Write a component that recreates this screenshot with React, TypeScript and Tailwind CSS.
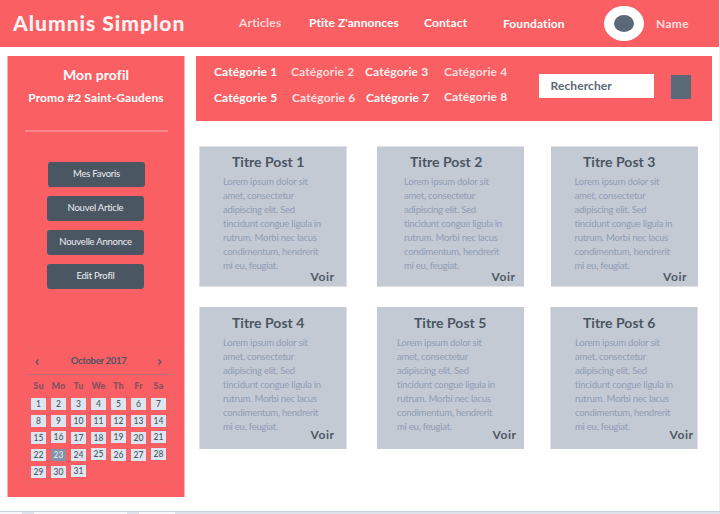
const lorem = [
  "Lorem ipsum dolor sit",
  "amet, consectetur",
  "adipiscing elit. Sed",
  "tincidunt congue ligula in",
  "rutrum. Morbi nec lacus",
  "condimentum, hendrerit",
  "mi eu, feugiat.",
];

type Post = { title: string; card: string; heading: string; body: string; link: string };

const posts: Post[] = [
  { title: "Titre Post 1", card: "h-[141px] w-[148px] border", heading: "pl-8", body: "pl-[23px]", link: "top-[122px] left-[110.5px]" },
  { title: "Titre Post 2", card: "h-[141px] w-[147px] ml-[30px] border-y", heading: "pl-[33px]", body: "pl-[27px]", link: "top-[122px] left-[114.5px]" },
  { title: "Titre Post 3", card: "h-[141px] w-[147px] ml-[27px] border-y", heading: "pl-8", body: "pl-[23.5px]", link: "top-[122px] left-[112px]" },
  { title: "Titre Post 4", card: "h-[142px] w-[148px] border-x pt-px", heading: "pl-8", body: "pl-[23px]", link: "top-[120px] left-[110.5px]" },
  { title: "Titre Post 5", card: "h-[142px] w-[147px] ml-[30px] pt-px", heading: "pl-[37px]", body: "pl-5", link: "top-[120px] left-[115.5px]" },
  { title: "Titre Post 6", card: "h-[142px] w-[148px] ml-[26px] border-x pt-px", heading: "pl-8", body: "pl-[24px]", link: "top-[120px] left-[118.5px]" },
];

const categories = [
  { label: "Catégorie 1", cls: "w-[77px] text-white" },
  { label: "Catégorie 2", cls: "w-[74px] text-[#ffdadc]" },
  { label: "Catégorie 3", cls: "w-[79px] text-[#fff0f0]" },
  { label: "Catégorie 4", cls: "w-[70px] text-[#ffdadc]" },
  { label: "Catégorie 5", cls: "w-[78px] text-white" },
  { label: "Catégorie 6", cls: "w-[74px] text-[#ffe2e3]" },
  { label: "Catégorie 7", cls: "w-[78px] text-white" },
  { label: "Catégorie 8", cls: "w-[70px] -mt-px text-[#ffeeee]" },
];

const actions = [
  { label: "Mes Favoris", cls: "ml-10" },
  { label: "Nouvel Article", cls: "ml-[39px]" },
  { label: "Nouvelle Annonce", cls: "ml-[39px]" },
  { label: "Edit Profil", cls: "ml-[39px]" },
];

const weekdays = ["Su", "Mo", "Tu", "We", "Th", "Fr", "Sa"];
const days = Array.from({ length: 31 }, (_, i) => i + 1);
const raised = [16, 19, 21, 25, 28, 31];

function PostCard({ post }: { post: Post }) {
  return (
    <article className={`relative shrink-0 border-[#dde1e7] bg-[#c3cad4] ${post.card}`}>
      <h2 className={`pt-[5px] text-sm leading-5 font-bold text-[#4b5663] ${post.heading}`}>{post.title}</h2>
      <div className={`mt-[3px] text-[9.5px] leading-[14px] font-medium tracking-[-0.25px] text-[#93a0b6] ${post.body}`}>
        {lorem.map((line) => (
          <p key={line}>{line}</p>
        ))}
      </div>
      <a className={`absolute text-xs leading-4 font-bold tracking-[0.6px] text-[#4e5965] ${post.link}`}>Voir</a>
    </article>
  );
}

function Chevron({ d }: { d: string }) {
  return (
    <svg viewBox="0 0 6 8" className="h-2 w-1.5" fill="none" stroke="#4b5663" strokeWidth="1.1">
      <path d={d} />
    </svg>
  );
}

function Calendar() {
  return (
    <section className="ml-[18px] h-[136px] w-[145px] border border-[#e9656a]">
      <header className="flex h-[27px] items-center justify-between border-b border-[#b9707c] px-[7px] pt-px text-[#4b5663]">
        <Chevron d="M4.5 1.5 L2 4 L4.5 6.5" />
        <span className="text-[9.5px] font-bold tracking-[-0.3px]">October 2017</span>
        <Chevron d="M1.5 1.5 L4 4 L1.5 6.5" />
      </header>
      <div className="ml-[4px] mt-1 grid w-[140px] grid-cols-7 text-center text-[9px] leading-[14px] font-black text-[#845260]">
        {weekdays.map((d) => (
          <span key={d} className="w-[15px] whitespace-nowrap tracking-[0.2px]">{d}</span>
        ))}
      </div>
      <div className="ml-[4px] mt-[5px] grid w-[140px] auto-rows-[17px] grid-cols-7">
        {days.map((d) => (
          <span
            key={d}
            className={`flex h-3 w-[15px] items-center justify-center text-[8.5px] leading-3 font-medium ${
              d === 23 ? "bg-[#8493a8] text-[#dfe5ee]" : "bg-[#dfe5ee] text-[#4b5663]"
            } ${raised.includes(d) ? "-mt-px" : ""}`}
          >
            {d}
          </span>
        ))}
      </div>
    </section>
  );
}

export default function App() {
  return (
    <div className="flex h-[514px] w-[720px] flex-col overflow-hidden bg-white font-['Lato','Noto_Sans',sans-serif]">
      <div className="flex h-[511px] flex-col border-r border-[#eceef2]">
        <header className="flex h-[47px] shrink-0 items-center bg-[#fa5f63] pl-[13px] text-xs font-bold text-white">
          <h1 className="w-[226px] pb-0.5 text-[21px] leading-7 font-black tracking-[1px] text-[#fff3f3]">Alumnis Simplon</h1>
          <span className="w-[70px] pb-px tracking-[0.2px] text-[#ffd6d8]">Articles</span>
          <span className="w-[115px] pb-px tracking-[0.05px]">Ptite Z'annonces</span>
          <span className="w-[79px] pb-px tracking-[0.15px]">Contact</span>
          <span className="w-[101px] pt-px tracking-[0.1px]">Foundation</span>
          <span className="flex h-[35px] w-[40px] items-center justify-center rounded-[50%] bg-white">
            <span className="h-[17px] w-5 rounded-[50%] bg-[#5b6877]" />
          </span>
          <span className="ml-3 pt-px tracking-[0.3px] text-[#ffdfe0]">Name</span>
        </header>
        <div className="flex pt-[9px]">
          <aside className="ml-[7px] h-[441px] w-[178px] shrink-0 border-x border-[#fdb0b3] bg-[#fa5f63]">
            <div className="text-center font-bold text-white">
              <h2 className="pt-[9px] text-sm leading-5 tracking-[0.1px]">Mon profil</h2>
              <p className="mt-1 text-xs leading-[18px] tracking-[0.1px]">Promo #2 Saint-Gaudens</p>
            </div>
            <hr className="mt-[23px] ml-[17px] w-[143px] border-t-2 border-[#fc8488]" />
            <div className="mt-[30px] flex flex-col items-start gap-[9px]">
              {actions.map((a) => (
                <button
                  key={a.label}
                  className={`h-[25px] w-[97px] rounded-[3px] bg-[#4b5663] pb-px text-[9.5px] leading-3 tracking-[-0.25px] text-[#eceff3] ${a.cls}`}
                >
                  {a.label}
                </button>
              ))}
            </div>
            <div className="h-[58px]" />
            <Calendar />
          </aside>
          <main className="ml-[11px]">
            <div className="flex h-[65px] w-[516px] bg-[#fa5f63]">
              <div className="ml-[18px] flex w-[325px] flex-wrap content-start pt-[7px] text-xs leading-[18px] font-bold tracking-[0.15px]">
                {categories.map((c) => (
                  <span key={c.label} className={`h-[26px] ${c.cls}`}>{c.label}</span>
                ))}
              </div>
              <div className="mt-[18px] flex h-6 w-[115px] items-center bg-white pl-[11.5px] text-xs font-bold tracking-[0.1px] text-[#5b6877]">
                Rechercher
              </div>
              <div className="mt-[19px] ml-[17px] h-6 w-5 bg-[#5b6877]" />
            </div>
            <div className="mt-[25px] ml-[3px] flex flex-wrap gap-y-5">
              {posts.map((p) => (
                <PostCard key={p.title} post={p} />
              ))}
            </div>
          </main>
        </div>
      </div>
      <footer className="flex h-[3px] border-t border-[#c9cedb] bg-[#dde1ea]">
        <span className="w-[22px] bg-[#f6f7fb]" />
        <span className="ml-3 w-[93px] bg-[#f6f7fb]" />
        <span className="ml-3 w-[36px] bg-[#f6f7fb]" />
      </footer>
    </div>
  );
}
